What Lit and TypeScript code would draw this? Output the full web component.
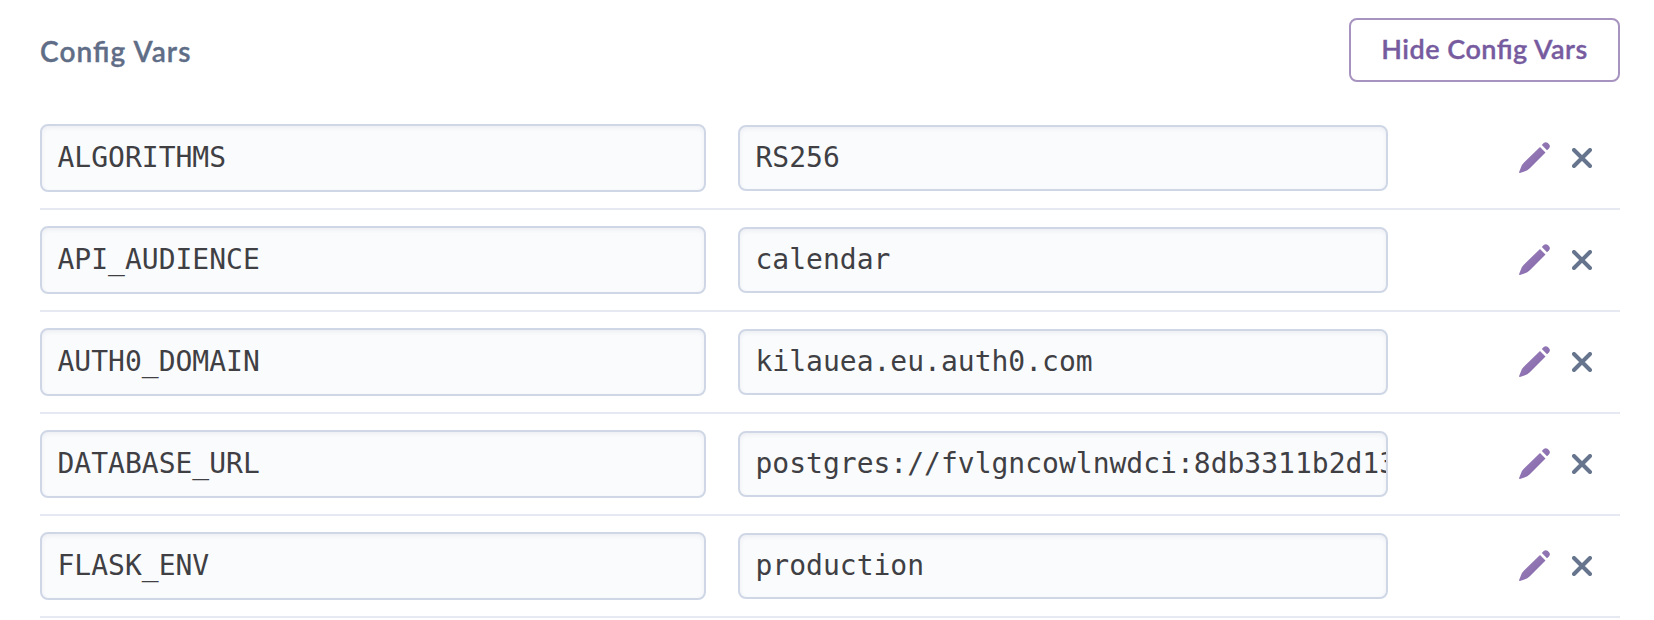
import { LitElement, html, css } from "lit";
import { customElement, property } from "lit/decorators.js";

@customElement("config-row")
class ConfigRow extends LitElement {
  @property() name = "";
  @property() value = "";

  static styles = css`
    :host {
      display: flex;
      align-items: center;
      box-sizing: border-box;
      height: 102px;
      padding-bottom: 2px;
      border-bottom: 2px solid #e6e9f1;
      padding-top: 2px;
    }
    .field {
      box-sizing: border-box;
      flex: none;
      overflow: hidden;
      white-space: pre;
      border: 2px solid #cfd7e6;
      border-radius: 8px;
      background: #fafbfd;
      box-shadow: inset 0 2px 4px rgba(60, 70, 100, 0.07);
      color: #3f3f44;
      font: 28px/62px "DejaVu Sans Mono", monospace;
    }
    .key {
      width: 666px;
      height: 68px;
      padding: 1px 16px 0 15.5px;
      margin-right: 32px;
    }
    .value {
      width: 650px;
      height: 66px;
      padding-left: 15.5px;
      overflow: hidden;
    }
    .actions {
      display: flex;
      align-items: center;
      margin-left: auto;
      margin-right: 28px;
      gap: 22px;
    }
    svg {
      display: block;
    }
    .pencil {
      margin-bottom: 1px;
    }
  `;

  render() {
    return html`
      <div class="field key">${this.name}</div>
      <div class="field value">${this.value}</div>
      <div class="actions">
        <svg class="pencil" width="31" height="31" viewBox="0 0 31 31">
          <defs>
            <linearGradient id="ink" x1="0" y1="0" x2="1" y2="1">
              <stop offset="0.2" stop-color="#9a80bb" />
              <stop offset="0.8" stop-color="#8466a8" />
            </linearGradient>
          </defs>
          <path
            fill="url(#ink)"
            d="M21 4.9 26.5 10.4 10.8 26.2Q8.5 28.4 5.4 29.5L.9 31Q0 31 0 30.2L2 25.2Q3.1 22.4 5 20.6ZM22.8 3.1 24.7 1.1Q26.7-.8 28.9 1.1L30 2.3Q31.8 4.4 29.9 6.4L28 8.3Z"
          />
        </svg>
        <svg width="20" height="20" viewBox="0 0 20 20">
          <path
            d="M2 2 18 18M18 2 2 18"
            fill="none"
            stroke="#66758d"
            stroke-width="4"
            stroke-linecap="round"
          />
        </svg>
      </div>
    `;
  }
}

@customElement("app-root")
class AppRoot extends LitElement {
  static styles = css`
    :host {
      display: block;
      box-sizing: border-box;
      height: 620px;
      overflow: hidden;
      padding: 18px 34px 0 40px;
      background: #fff;
      font-family: Lato, sans-serif;
    }
    .header {
      display: flex;
      justify-content: space-between;
      align-items: flex-start;
      height: 90px;
    }
    .title {
      margin: 0;
      color: #5f6d87;
      font-size: 28px;
      font-weight: 600;
      line-height: 66px;
      letter-spacing: 1.1px;
      font-feature-settings: "liga" 1;
      -webkit-text-stroke: 0.35px currentColor;
    }
    .toggle {
      box-sizing: border-box;
      width: 271px;
      height: 64px;
      padding: 0 0 2px;
      border: 2px solid #a793bf;
      border-radius: 8px;
      background: #fff;
      color: #775b9f;
      font: 600 27px/58px Lato, sans-serif;
      letter-spacing: 0.5px;
      font-feature-settings: "liga" 1;
      -webkit-text-stroke: 0.35px currentColor;
    }
  `;

  private vars = [
    ["ALGORITHMS", "RS256"],
    ["API_AUDIENCE", "calendar"],
    ["AUTH0_DOMAIN", "kilauea.eu.auth0.com"],
    ["DATABASE_URL", "postgres://fvlgncowlnwdci:8db3311b2d13"],
    ["FLASK_ENV", "production"],
  ];

  render() {
    return html`
      <div class="header">
        <h2 class="title">Config Vars</h2>
        <button class="toggle">Hide Config Vars</button>
      </div>
      ${this.vars.map(
        ([name, value]) => html`<config-row .name=${name} .value=${value}></config-row>`
      )}
    `;
  }
}
